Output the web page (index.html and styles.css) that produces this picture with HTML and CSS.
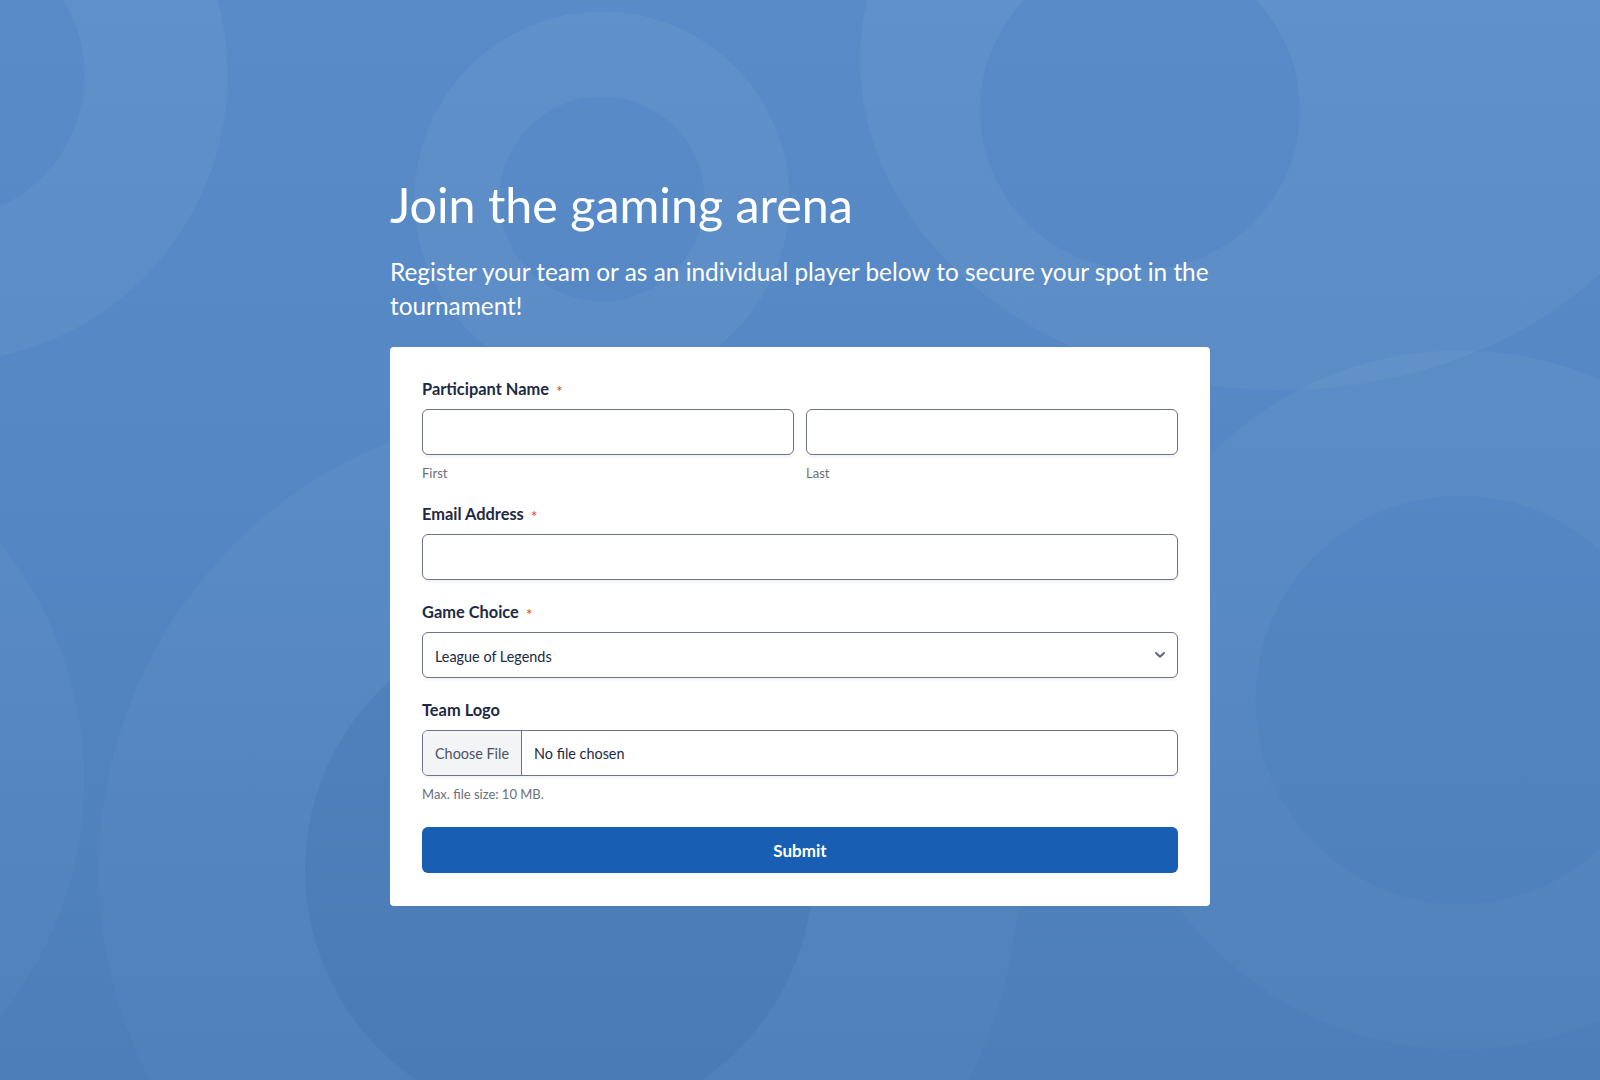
FILE: index.html
```html
<!DOCTYPE html>
<html lang="en">
<head>
<meta charset="utf-8">
<title>Join the gaming arena</title>
<link rel="stylesheet" href="styles.css">
</head>
<body>
<svg class="bg" width="1600" height="1080" viewBox="0 0 1600 1080" aria-hidden="true">
  <defs>
    <linearGradient id="fade" gradientUnits="userSpaceOnUse" x1="0" y1="0" x2="0" y2="1080">
      <stop offset="0" stop-color="#ffffff" stop-opacity="0.05"/>
      <stop offset="0.6" stop-color="#ffffff" stop-opacity="0.032"/>
      <stop offset="1" stop-color="#ffffff" stop-opacity="0.02"/>
    </linearGradient>
  </defs>
  <circle cx="-292" cy="780" r="376" fill="url(#fade)"/>
  <circle cx="559" cy="870" r="254" class="fill-dark"/>
  <circle cx="559" cy="870" r="357" fill="none" stroke="url(#fade)" stroke-width="206"/>
  <circle cx="-60" cy="75" r="216" fill="none" stroke="url(#fade)" stroke-width="143"/>
  <circle cx="602" cy="199" r="145" fill="none" stroke="url(#fade)" stroke-width="85"/>
  <path fill="url(#fade)" fill-rule="evenodd" d="M860 60 A420 330 0 1 0 1700 60 A420 330 0 1 0 860 60 Z M980 110 A160 160 0 1 0 1300 110 A160 160 0 1 0 980 110 Z"/>
  <circle cx="1460" cy="700" r="277" fill="none" stroke="url(#fade)" stroke-width="145"/>
</svg>
<main class="page">
  <div class="wrap">
    <h1 class="title">Join the gaming arena</h1>
    <p class="subtitle">Register your team or as an individual player below to secure your spot in the tournament!</p>
    <form class="card">
      <div class="field">
        <div class="label">Participant Name <span class="req">*</span></div>
        <div class="name-row">
          <div class="name-col">
            <input class="input" type="text" aria-label="First">
            <span class="sublabel">First</span>
          </div>
          <div class="name-col">
            <input class="input" type="text" aria-label="Last">
            <span class="sublabel">Last</span>
          </div>
        </div>
      </div>
      <div class="field">
        <div class="label">Email Address <span class="req">*</span></div>
        <input class="input" type="email" aria-label="Email Address">
      </div>
      <div class="field">
        <div class="label">Game Choice <span class="req">*</span></div>
        <div class="select-wrap">
          <select class="input select" aria-label="Game Choice">
            <option>League of Legends</option>
          </select>
          <svg class="chevron" width="12" height="8" viewBox="0 0 12 8" aria-hidden="true"><path d="M2 2 L6 5.8 L10 2" fill="none" stroke="#5f6677" stroke-width="2" stroke-linecap="round" stroke-linejoin="round"/></svg>
        </div>
      </div>
      <div class="field">
        <div class="label">Team Logo</div>
        <label class="file">
          <span class="file-btn">Choose File</span>
          <span class="file-name">No file chosen</span>
          <input class="file-input" type="file">
        </label>
        <span class="sublabel">Max. file size: 10 MB.</span>
      </div>
      <button class="submit" type="button">Submit</button>
    </form>
  </div>
</main>
</body>
</html>
```
FILE: styles.css
```css
html, body {
  margin: 0;
  padding: 0;
}
body {
  font-family: Lato, "Noto Sans", "Liberation Sans", sans-serif;
  background: linear-gradient(180deg, #588bc7 0%, #5487c3 45%, #4d7eb9 100%);
  min-height: 1080px;
  position: relative;
  overflow: hidden;
}
.bg {
  position: absolute;
  left: 0;
  top: 0;
  z-index: 0;
}
.fill-dark {
  fill: rgba(0, 0, 0, 0.02);
}
.page {
  position: relative;
  z-index: 1;
  min-height: 1080px;
  display: flex;
  align-items: center;
  justify-content: center;
}
.wrap {
  width: 820px;
}
.title {
  margin: 0 0 21px;
  font-size: 48.4px;
  line-height: 60px;
  font-weight: 400;
  color: #ffffff;
}
.subtitle {
  margin: 0 0 24px;
  font-size: 24.4px;
  line-height: 34px;
  font-weight: 400;
  color: #ffffff;
}
.card {
  background: #ffffff;
  border-radius: 4px;
  padding: 32px 32px 33px;
  display: flex;
  flex-direction: column;
}
.field {
  display: flex;
  flex-direction: column;
  margin-bottom: 22px;
}
.label {
  font-size: 16.4px;
  line-height: 20px;
  font-weight: 700;
  color: #1e2a44;
  margin-bottom: 10px;
}
.req {
  color: #e5412b;
  font-size: 16px;
  font-weight: 400;
  line-height: 0;
  margin-left: 3px;
  vertical-align: -2px;
}
.name-row {
  display: flex;
  gap: 12px;
}
.name-col {
  flex: 1;
  display: flex;
  flex-direction: column;
}
.input {
  box-sizing: border-box;
  height: 46px;
  width: 100%;
  border: 1px solid #6e7486;
  border-radius: 6px;
  background: #ffffff;
  box-shadow: 0 2px 3px rgba(30, 42, 68, 0.06);
  font-family: inherit;
  font-size: 14.4px;
  color: #1e2a44;
  padding: 0 12px;
  margin: 0;
}
.sublabel {
  display: block;
  margin-top: 9px;
  font-size: 13px;
  line-height: 18px;
  color: #6b6f7a;
}
.select-wrap {
  position: relative;
}
.select {
  appearance: none;
  -webkit-appearance: none;
  padding-top: 2px;
}
.chevron {
  position: absolute;
  right: 12px;
  top: 19px;
}
.file {
  box-sizing: border-box;
  height: 46px;
  display: flex;
  align-items: stretch;
  border: 1px solid #6e7486;
  border-radius: 6px;
  overflow: hidden;
  box-shadow: 0 2px 3px rgba(30, 42, 68, 0.06);
  font-size: 14.4px;
}
.file-btn {
  display: flex;
  align-items: center;
  padding: 0 12px;
  background: #f3f4f6;
  border-right: 1px solid #6e7486;
  color: #4b5263;
}
.file-name {
  display: flex;
  align-items: center;
  padding: 1px 12px 0;
  color: #1e2a44;
}
.file-input {
  display: none;
}
.submit {
  margin-top: 2px;
  height: 46px;
  border: 0;
  border-radius: 6px;
  background: #185fb3;
  color: #ffffff;
  font-family: inherit;
  font-size: 17px;
  font-weight: 700;
  cursor: pointer;
}
```
